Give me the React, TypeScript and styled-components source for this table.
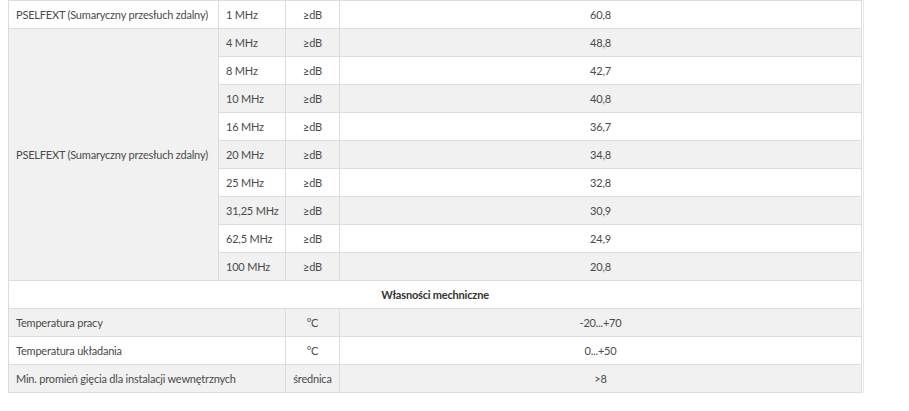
import React from "react";
import styled, { createGlobalStyle } from "styled-components";

const Global = createGlobalStyle`
  html, body { margin: 0; padding: 0; background: #fff; }
  body { padding: 0 0 0 8px; font-family: Lato, "Open Sans", sans-serif; }
`;

const Wrap = styled.div`
  width: 856px;
  border-right: 1px solid #e8e8e8;
  box-sizing: border-box;
`;

const Table = styled.table`
  width: 854px;
  border-collapse: collapse;
  table-layout: fixed;
  font-family: Lato, "Open Sans", sans-serif;
  font-size: 11px;
  letter-spacing: -0.2px;
  color: #4a4a4a;
`;

const Row = styled.tr<{ $gray?: boolean }>`
  height: 28px;
  background: ${(p) => (p.$gray ? "#f1f1f1" : "#fff")};
`;

const Cell = styled.td<{ $align?: "left" | "center"; $bold?: boolean }>`
  border: 1px solid #dddddd;
  padding: 0 7px;
  height: 27px;
  box-sizing: border-box;
  text-align: ${(p) => p.$align ?? "left"};
  font-weight: ${(p) => (p.$bold ? 700 : 400)};
  color: ${(p) => (p.$bold ? "#333" : "inherit")};
  vertical-align: middle;
  white-space: nowrap;
`;

const rows = [
  ["4 MHz", "48,8"],
  ["8 MHz", "42,7"],
  ["10 MHz", "40,8"],
  ["16 MHz", "36,7"],
  ["20 MHz", "34,8"],
  ["25 MHz", "32,8"],
  ["31,25 MHz", "30,9"],
  ["62,5 MHz", "24,9"],
  ["100 MHz", "20,8"],
];

const mech = [
  ["Temperatura pracy", "°C", "-20...+70"],
  ["Temperatura układania", "°C", "0...+50"],
  ["Min. promień gięcia dla instalacji wewnętrznych", "średnica", ">8"],
];

export default function App() {
  return (
    <>
      <Global />
      <Wrap>
        <Table>
          <colgroup>
            <col style={{ width: 210 }} />
            <col style={{ width: 67 }} />
            <col style={{ width: 54 }} />
            <col />
          </colgroup>
          <tbody>
            <Row>
              <Cell>PSELFEXT (Sumaryczny przesłuch zdalny)</Cell>
              <Cell>1 MHz</Cell>
              <Cell $align="center">≥dB</Cell>
              <Cell $align="center">60,8</Cell>
            </Row>
            {rows.map(([f, v], i) => (
              <Row key={f} $gray={i % 2 === 0}>
                {i === 0 && (
                  <Cell rowSpan={rows.length}>PSELFEXT (Sumaryczny przesłuch zdalny)</Cell>
                )}
                <Cell>{f}</Cell>
                <Cell $align="center">≥dB</Cell>
                <Cell $align="center">{v}</Cell>
              </Row>
            ))}
            <Row>
              <Cell colSpan={4} $align="center" $bold>
                Własności mechniczne
              </Cell>
            </Row>
            {mech.map(([a, b, c], i) => (
              <Row key={a} $gray={i % 2 === 0}>
                <Cell colSpan={2}>{a}</Cell>
                <Cell $align="center">{b}</Cell>
                <Cell $align="center">{c}</Cell>
              </Row>
            ))}
          </tbody>
        </Table>
      </Wrap>
    </>
  );
}
